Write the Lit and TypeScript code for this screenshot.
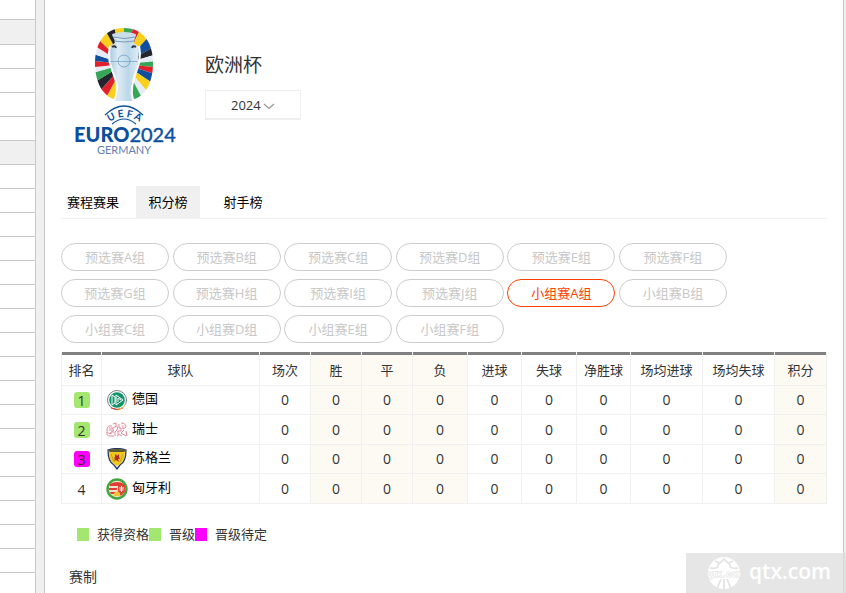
import { LitElement, html, css, svg } from "lit";
import { customElement, state } from "lit/decorators.js";
import { classMap } from "lit/directives/class-map.js";

const RED = "#e2202c";
const YELLOW = "#fbd01c";
const GREEN = "#35a556";
const BLUE = "#0f4f9e";
const BLACK = "#23242c";
const WHITE = "#e6ebf5";

/* Ring colours, each with the clockwise angle at which its ray ends. */
const RAYS: [number, string][] = [
  [14, GREEN], [25, RED], [42, YELLOW], [60, BLUE], [73, BLACK], [85, WHITE],
  [96, GREEN], [108, RED], [124, BLUE], [140, YELLOW], [152, WHITE], [175, GREEN],
  [190, WHITE], [208, YELLOW], [222, RED], [238, BLACK], [254, GREEN], [264, WHITE],
  [276, RED], [288, BLUE], [302, WHITE], [314, RED], [331, YELLOW], [345, BLACK], [360, YELLOW],
];

function rays() {
  const at = (deg: number) => {
    const a = (deg * Math.PI) / 180;
    return `${(51 + 60 * Math.sin(a)).toFixed(1)},${(38 - 60 * Math.cos(a)).toFixed(1)}`;
  };
  let from = 0;
  return RAYS.map(([to, fill]) => {
    const wedge = svg`<path d="M51,38 L${at(from)} L${at(to)} Z" fill=${fill}></path>`;
    from = to;
    return wedge;
  });
}

@customElement("euro-logo")
class EuroLogo extends LitElement {
  static styles = css`
    :host { display: block; width: 104px; height: 132px; }
    svg { display: block; width: 100%; height: 100%; }
    text { font-family: Lato, "Open Sans", sans-serif; fill: #0b4f9f; }
    .uefa { font-size: 10px; font-weight: 700; }
    .name { font-size: 20px; }
    .heavy { font-weight: 900; }
    .year { font-weight: 400; stroke: #0b4f9f; stroke-width: 0.4; }
    .host { font-size: 11px; fill: #6480b4; }
  `;
  render() {
    return html`<svg viewBox="0 0 104 132" role="img" aria-label="UEFA EURO2024 Germany">
      <defs>
        <clipPath id="ring"><path d="M51,2 C71,2 80,18 80,37 C80,58 71,75 51,75 C31,75 22,58 22,37 C22,18 31,2 51,2Z"></path></clipPath>
        <linearGradient id="silver">
          <stop offset="0" stop-color="#a5c8df"></stop><stop offset=".3" stop-color="#dcebf5"></stop>
          <stop offset=".65" stop-color="#bcd7e9"></stop><stop offset="1" stop-color="#dfedf6"></stop>
        </linearGradient>
        <path id="arc" d="M32,99 Q51,83 71,99"></path>
      </defs>
      <g clip-path="url(#ring)">${rays()}</g>
      <path d="M39,9 Q51,4 63,9 L61,15 Q60,18 64,19 Q67,22 65,31 C66,42 59,51 58,61 Q57,69 61,75 L42,75 Q46,68 45,61 C44,51 36,42 37,31 Q35,22 38,19 Q42,18 42,15Z" fill="url(#silver)"></path>
      <path d="M39,8 Q51,4 63,8 Q62,12 51,12 Q40,12 39,8Z" fill="#cbdde9"></path>
      <path d="M41,15 Q51,17 62,15 M40,11 Q51,14 62,11" stroke="#7d9bb3" fill="none"></path>
      <path d="M39,21 q3,-2 4,1 M63,21 q-3,-2 -4,1" stroke="#303640" stroke-width="2" fill="none"></path>
      <path d="M37,20 C33,37 42,46 44,60 Q44,70 41,75 M66,20 C70,38 60,47 59,62 Q58,70 61,75" stroke="#f6fafd" stroke-width="2.200" fill="none"></path>
      <circle cx="51" cy="35" r="6" fill="none" stroke="#6fa0c2" stroke-width=".8"></circle>
      <path d="M37,35.500 H65" stroke="#6fa0c2" stroke-width=".7"></path>
      <path d="M32,89 Q51,71 70,89 M39,98 Q51,88 63,98" stroke="#0b4f9f" stroke-width="1.200" fill="none"></path>
      <text class="uefa"><textPath href="#arc" startOffset="50%" text-anchor="middle">U E F A</textPath></text>
      <text class="name" x="1" y="116"><tspan class="heavy">EURO</tspan><tspan class="year">2024</tspan></text>
      <text class="host" x="51" y="128" text-anchor="middle">GERMANY</text>
    </svg>`;
  }
}

const crests: Record<string, unknown> = {
  de: svg`<circle cx="11" cy="11" r="9.500" fill="#fff" stroke="#777f7c"></circle>
    <path d="M5,19 Q11,22 17,19" stroke="#d33" fill="none"></path><path d="M12,20.300 Q17,19.500 19,16" stroke="#f2c230" fill="none"></path>
    <circle cx="11" cy="11" r="7.800" fill="#12946b"></circle>
    <path d="M6,6 V16 L9,14 V8 L6,6 M10,6 L17,11 L10,16 V6 M12,9 V13 M12,9 L15,11" stroke="#fff" fill="none"></path>`,
  ch: svg`<g stroke="#e88a99" fill="none">
    <path d="M6,7 Q1,6 1,11 Q1,16 6,14 M1,13 Q0,17 4,17 H8 M3,9 H7 M3,11 H6 M7,5 L10,4 V7 L7,9 V14 M9,8 Q13,6 11,11 L9,13 V17 M13,5 V9 H15 V12 H12 V16 M15,4 Q20,4 20,8 L17,10 V6 M18,11 L15,14 L20,17 M20,12 L21,17 M11,17 Q13,14 16,17 M4,14 L8,11"></path></g>`,
  sco: svg`<path d="M2,2 Q11,-1 20,2 Q20,14 14,17 L11,21 L8,17 Q2,14 2,2Z" fill="#e9ebf2" stroke="#273759" stroke-width="1.300"></path>
    <path d="M3,3 H19 Q19,13 14,16 L11,18 L8,16 Q3,13 3,3Z" fill="#f1c81c"></path>
    <path d="M2,2 Q11,0 20,2 L18,4 H4Z" fill="#5a5a2c"></path>
    <path d="M9,7 L10,6 L11,8 L13,6 L13,9 L14,11 L12,11 L13,14 L10,12 L8,13 L9,11 L8,10 L9,9Z" fill="#b42c20"></path>
    <path d="M5,6 L8,14 M17,6 L14,14" stroke="#b59a20" stroke-width=".8"></path>`,
  hu: svg`<circle cx="11" cy="11" r="9.500" fill="#f3dfd0" stroke="#41a83d" stroke-width="2.400"></circle>
    <path d="M4,6 Q11,2 18,6 V8 H4Z M3,10 H11 V12 H3Z M4,14 H10 V16 H5Z" fill="#e23c34"></path>
    <path d="M12,7 H19 V14 L15,18 L12,14Z" fill="#dc4436"></path>
    <path d="M15.500,8 V14 M13,10 H18 M13.500,12 H17.500" stroke="#fff"></path>
    <path d="M8,18 V15 Q11,12 14,15 V18Z" fill="#efc634"></path>`,
};

@customElement("team-crest")
class TeamCrest extends LitElement {
  static properties = { team: { type: String } };
  declare team: string;
  static styles = css`
    :host { display: block; width: 22px; height: 22px; }
    svg { display: block; }
  `;
  render() {
    return html`<svg width="22" height="22" viewBox="0 0 22 22" aria-hidden="true">${crests[this.team]}</svg>`;
  }
}

const TABS = ["赛程赛果", "积分榜", "射手榜"];
const GROUPS = [
  ..."ABCDEFGHIJ".split("").map((l) => `预选赛${l}组`),
  ..."ABCDEF".split("").map((l) => `小组赛${l}组`),
];
const COLUMNS = [
  { label: "排名", width: 41 }, { label: "球队", width: 158 }, { label: "场次", width: 51 },
  { label: "胜", width: 51, tint: true }, { label: "平", width: 51, tint: true },
  { label: "负", width: 55, tint: true }, { label: "进球", width: 54 }, { label: "失球", width: 55 },
  { label: "净胜球", width: 54 }, { label: "场均进球", width: 72 }, { label: "场均失球", width: 72 },
  { label: "积分", width: 52, tint: true },
];
const TOTAL = COLUMNS.reduce((sum, c) => sum + c.width, 0);
const TEAMS = [
  { id: "de", name: "德国", mark: "green" },
  { id: "ch", name: "瑞士", mark: "green" },
  { id: "sco", name: "苏格兰", mark: "pink" },
  { id: "hu", name: "匈牙利", mark: "" },
];
const LEGEND = [
  { label: "获得资格", mark: "green" },
  { label: "晋级", mark: "green" },
  { label: "晋级待定", mark: "pink" },
];

@customElement("app-root")
class AppRoot extends LitElement {
  @state() tab = "积分榜";
  @state() group = "小组赛A组";

  static styles = css`
    :host {
      display: flex; position: relative; min-height: 100vh; overflow: hidden;
      box-sizing: border-box; background: #f0f0f0; color: #333;
      font: 13px/20px "Open Sans", "Noto Sans CJK SC", sans-serif;
    }
    * { box-sizing: border-box; }
    button, select { font: inherit; margin: 0; cursor: pointer; }
    .side { flex: none; width: 36px; display: flex; flex-direction: column; background: #fff; border-right: 1px solid #c8c8c8; }
    .line { height: 24px; border-bottom: 1px solid #c8c8c8; }
    .line:first-child { height: 20px; }
    .line.shade { background: #f0f0f0; }
    .line.shade.top { height: 25px; }
    .line:last-child { height: auto; flex: 1; border: 0; }
    main { flex: 1; min-width: 0; margin: 0 2px 0 8px; padding: 26px 16px 4px; background: #fff; border: solid #c8c8c8; border-width: 0 1px; }
    .head { display: flex; gap: 28px; padding-left: 12px; }
    .info { display: flex; flex-direction: column; align-items: flex-start; gap: 11px; padding-top: 25px; }
    h1 { margin: 0; font-size: 19px; line-height: 28px; font-weight: 400; }
    .pick { position: relative; }
    select { appearance: none; width: 96px; height: 30px; padding: 0 25px; border: 1px solid #eee; border-bottom-width: 2px; border-radius: 0; background: #fff; color: #333; }
    .chevron { position: absolute; right: 26px; top: 13px; pointer-events: none; }
    .tabs { display: flex; gap: 11px; margin-top: 28px; border-bottom: 1px solid #f0f0f0; }
    .tab { width: 64px; height: 32px; padding: 0; border: 0; background: none; color: #000; white-space: nowrap; }
    .tab.on { background: #f0f0f0; }
    .groups { display: grid; grid-template-columns: repeat(6, 108px); justify-content: space-between; row-gap: 8px; max-width: 666px; margin: 24px 0 9px; }
    .group { height: 28px; padding: 0; border: 1px solid #ccc; border-radius: 14px; background: #fff; color: #c8c8c8; }
    .group.on { border-color: #ff4100; color: #ff4100; }
    table { width: 100%; table-layout: fixed; border-collapse: separate; border-spacing: 0; text-align: center; }
    th, td { padding: 0; border: solid #f0f0f0; border-width: 0 1px 1px 0; background-clip: padding-box; white-space: nowrap; font-weight: 400; height: 29px; }
    td { font-size: 14px; }
    th:first-child, td:first-child { border-left-width: 1px; }
    tbody tr:nth-child(even) td { height: 30px; }
    th { height: 34px; padding-top: 3px; background-image: linear-gradient(#808080 3px, transparent 3px); }
    .tint { background-color: #fdfaf3; }
    .rank { display: block; width: 16px; height: 16px; margin: 0 auto; border-radius: 3px; line-height: 17px; }
    .green { background: #a3e771; }
    .pink { background: #f0f; }
    .team { display: flex; align-items: center; gap: 4px; padding-left: 4px; color: #000; font-size: 13px; text-decoration: none; }
    .team span { padding-bottom: 4px; }
    .legend { display: flex; margin: 20px 0 0; padding: 0 0 0 16px; list-style: none; }
    .legend li { display: flex; align-items: center; gap: 8px; }
    .swatch { width: 12px; height: 13px; }
    h2 { margin: 22px 0 0 8px; font-size: 14px; line-height: 22px; font-weight: 400; }
    .mark { position: absolute; right: 0; bottom: 0; width: 160px; height: 40px; display: flex; align-items: center; gap: 6px; padding-left: 19px; background: rgba(222, 222, 222, 0.75); color: #fff; font: 600 21px/36px "Open Sans", sans-serif; }
    .mark span { padding-bottom: 4px; }
    .globe { font: 700 8px "Liberation Mono", monospace; fill: #fff; stroke: #dcdcdc; stroke-width: 1; paint-order: stroke; }
  `;

  render() {
    return html`
      <div class="side">
        ${Array.from({ length: 25 }, (_, i) => html`<div class=${classMap({ line: true, shade: i === 1 || i === 6, top: i === 1 })}></div>`)}
      </div>
      <main>
        <header class="head">
          <euro-logo></euro-logo>
          <div class="info">
            <h1>欧洲杯</h1>
            <div class="pick">
              <select aria-label="赛季"><option>2024</option></select>
              <svg class="chevron" width="12" height="7" viewBox="0 0 12 7" aria-hidden="true"><path d="M1,1 L6,5.500 L11,1" fill="none" stroke="#999" stroke-width="1.300"></path></svg>
            </div>
          </div>
        </header>
        <nav class="tabs">
          ${TABS.map((t) => html`<button class=${classMap({ tab: true, on: t === this.tab })} @click=${() => (this.tab = t)}>${t}</button>`)}
        </nav>
        <div class="groups">
          ${GROUPS.map((g) => html`<button class=${classMap({ group: true, on: g === this.group })} @click=${() => (this.group = g)}>${g}</button>`)}
        </div>
        <table>
          <colgroup>${COLUMNS.map((c) => html`<col style="width:${(c.width / TOTAL) * 100}%">`)}</colgroup>
          <thead><tr>${COLUMNS.map((c) => html`<th scope="col" class=${c.tint ? "tint" : ""}>${c.label}</th>`)}</tr></thead>
          <tbody>
            ${TEAMS.map((t, i) => html`<tr>
              <td><span class="rank ${t.mark}">${i + 1}</span></td>
              <td><a class="team" href="#${t.id}"><team-crest team=${t.id}></team-crest><span>${t.name}</span></a></td>
              ${COLUMNS.slice(2).map((c) => html`<td class=${c.tint ? "tint" : ""}>0</td>`)}
            </tr>`)}
          </tbody>
        </table>
        <ul class="legend">
          ${LEGEND.map((l) => html`<li><span class="swatch ${l.mark}"></span>${l.label}</li>`)}
        </ul>
        <h2>赛制</h2>
      </main>
      <div class="mark">
        <svg width="38" height="38" viewBox="0 0 38 38" aria-hidden="true">
          <circle cx="19" cy="19" r="16" fill="#fff"></circle>
          <path d="M10,7 L15,9 L19,5 L23,9 L28,7 M13,13 Q10,15 5,14 M25,13 Q28,15 33,14 M12,35 L16,25 M19,36 V25 M26,35 L22,25 M14,9 L12,14 M24,9 L26,14" fill="none" stroke="#e4e4e4" stroke-width="1.800"></path>
          <text class="globe" x="19" y="23" text-anchor="middle">QTX.COM</text>
        </svg>
        <span>qtx.com</span>
      </div>
    `;
  }
}
